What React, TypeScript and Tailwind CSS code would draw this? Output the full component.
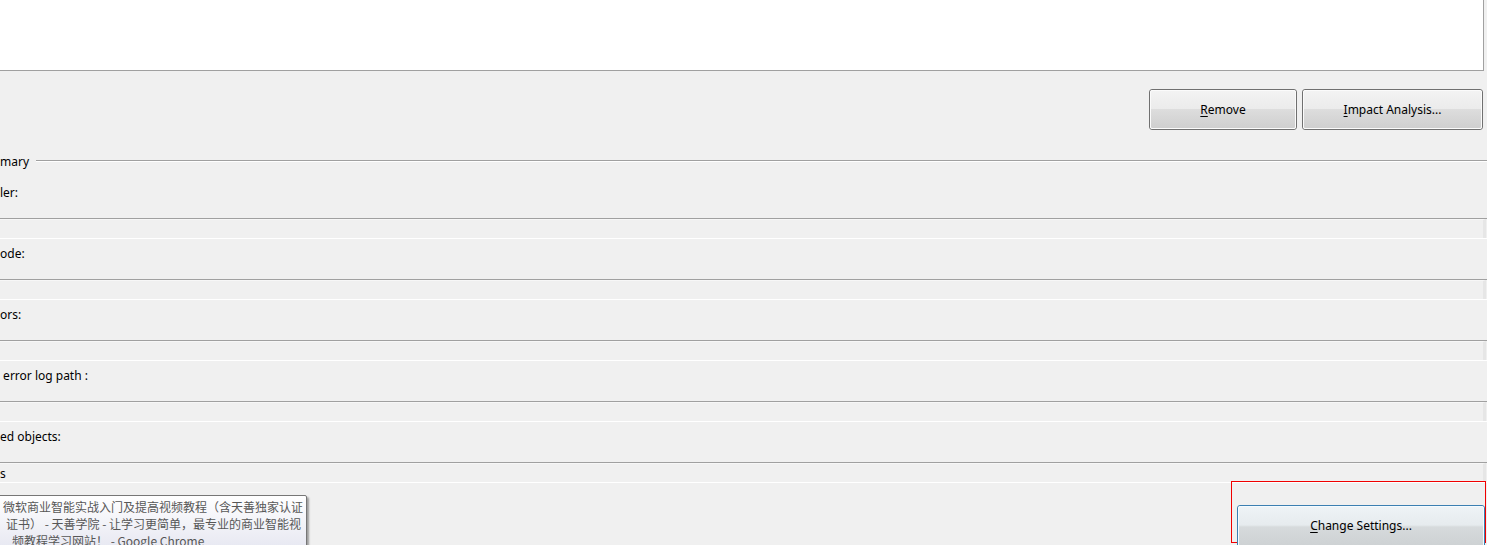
const ui = { fontFamily: '"Noto Sans", "Open Sans", Arial, sans-serif' };
const cjk = { fontFamily: '"Noto Sans CJK SC", "Noto Sans", sans-serif' };

function Key({ k, rest }: { k: string; rest: string }) {
  return (
    <span>
      <span className="underline underline-offset-2">{k}</span>
      {rest}
    </span>
  );
}

function WinButton({ children, className = "" }: { children: React.ReactNode; className?: string }) {
  return (
    <div
      className={`flex items-center justify-center rounded-[3px] border border-[#707070] text-[12px] text-black ${className}`}
      style={ui}
    >
      <div className="flex h-full w-full items-center justify-center rounded-[2px] border border-[#fbfbfb] bg-[linear-gradient(#f3f3f3_0%,#ebebeb_49%,#dddddd_50%,#cfcfcf_100%)]">
        {children}
      </div>
    </div>
  );
}

function Field({ text = "" }: { text?: string }) {
  return (
    <div className="h-[21px] border-t border-b border-t-[#a0a0a0] border-b-white pr-[1px]">
      <div className="flex h-full items-center border-t border-r-[3px] border-r-[#e6e6e6] border-t-[#f7f7f7] bg-[#f0f0f0] pt-[1px] text-[12px] leading-none">
        {text}
      </div>
    </div>
  );
}

function Row({ label, value }: { label: string; value?: string }) {
  return (
    <div className="flex flex-col pb-[6px]">
      <div className="mb-[16px] h-[18px] pt-[1px] text-[12px] leading-4 text-black whitespace-pre">{label}</div>
      <Field text={value} />
    </div>
  );
}

export default function App() {
  return (
    <div className="relative h-[545px] w-[1487px] overflow-hidden bg-[#f0f0f0] text-black" style={ui}>
      <div className="h-[71px] w-[1484px] border-r border-b border-[#a0a0a0] bg-white" />

      <div className="mt-[18px] flex justify-end gap-[5px] pr-[4px]">
        <WinButton className="h-[41px] w-[148px]">
          <Key k="R" rest="emove" />
        </WinButton>
        <WinButton className="h-[41px] w-[181px]">
          <Key k="I" rest="mpact Analysis..." />
        </WinButton>
      </div>

      <div className="mt-[22px] flex h-[18px] items-center">
        <span className="pt-[2px] text-[12px] leading-4">mary</span>
        <div className="ml-[7px] h-[2px] flex-1 border-t border-b border-t-[#a0a0a0] border-b-white" />
      </div>

      <div className="mt-[14px] flex flex-col">
        <Row label="ler:" />
        <Row label="ode:" />
        <Row label="ors:" />
        <Row label=" error log path :" />
        <Row label="ed objects:" value="s" />
      </div>

      <div className="absolute left-[1231px] top-[481px] h-[62px] w-[255px] border border-solid border-[color:#f00000]" />
      <div className="absolute left-[1237px] top-[505px] h-[44px] w-[248px] rounded-[3px] border border-[#3c7fb1] text-[12px]">
        <div className="flex h-full w-full items-start justify-center rounded-[2px] border border-[#f4fbff] bg-[linear-gradient(#eef3f6_0%,#e6ebee_45%,#d6dadc_50%,#cdd1d3_100%)] pt-[10px]">
          <Key k="C" rest="hange Settings..." />
        </div>
      </div>

      <div
        className="absolute -left-[4px] top-[495px] h-[60px] w-[311px] rounded-[2px] border border-[#767676] bg-[linear-gradient(#ffffff,#e4e5f0)] text-[12px] leading-[17px] text-[#575757] shadow-[2px_2px_2px_rgba(0,0,0,0.35)]"
        style={cjk}
      >
        <div className="pt-[2px]">
          <div className="pl-[6px] whitespace-nowrap">微软商业智能实战入门及提高视频教程（含天善独家认证</div>
          <div className="pl-[9px] whitespace-nowrap">证书） - 天善学院 - 让学习更简单，最专业的商业智能视</div>
          <div className="pl-[15px] whitespace-nowrap">频教程学习网站！ - Google Chrome</div>
        </div>
      </div>
    </div>
  );
}
